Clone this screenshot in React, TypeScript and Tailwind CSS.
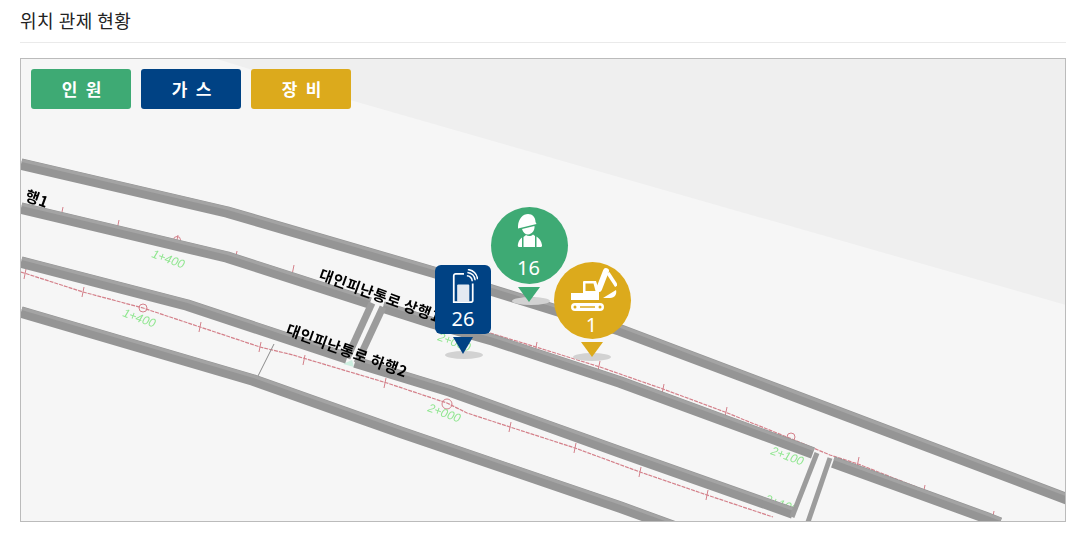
const roads = [
  "21,164 227,212 433,272 620,330 787,393 1070,500",
  "21,208 227,257 370,303",
  "383,307 433,323 493,340 620,382 813,453",
  "833,462 987,518 1000,523",
  "21,262 187,305 347,358",
  "355,362 450,391 620,452 793,513",
  "21,312 253,380 400,432 620,507 675,527",
];

const connectors = [
  { points: "372,303 347,358", width: 7 },
  { points: "383,307 357,363", width: 7 },
  { points: "817,453 792,517", width: 5 },
  { points: "830,458 808,522", width: 5 },
];

const lowerRed = "21,272 83,292 143,308 200,327 260,347 293,355 387,383 447,403 467,413 510,427 575,448 640,472 707,495 773,517";
const upperRed = "490,333 536,347 600,367 663,389 725,412 747,421 787,437 830,455 858,464 924,490 993,517";

const ticks = [
  [25, 274], [83, 292], [200, 327], [260, 347], [304, 360], [385, 383], [510, 427], [575, 448], [640, 472], [707, 495],
  [62, 212], [118, 225], [177, 240], [236, 256], [293, 270],
  [536, 347], [599, 366], [663, 389], [726, 412], [858, 462], [924, 490], [993, 516],
];

const greenLabels = [
  { x: 151, y: 257, text: "1+400" },
  { x: 122, y: 316, text: "1+400" },
  { x: 427, y: 411, text: "2+000" },
  { x: 770, y: 454, text: "2+100" },
  { x: 764, y: 502, text: "2+100" },
  { x: 437, y: 340, text: "2+000" },
];

function MapDrawing() {
  return (
    <svg viewBox="21 59 1044 462" className="absolute inset-0 h-full w-full blur-[0.7px]">
      <polygon points="217,59 350,100 1066,305 1066,59" fill="#efefef" />
      <polyline points={lowerRed} fill="none" stroke="#d4808a" strokeWidth="1.2" strokeDasharray="4 1" />
      <polyline points={upperRed} fill="none" stroke="#d4808a" strokeWidth="1.2" strokeDasharray="4 1" />
      {ticks.map(([x, y]) => (
        <line key={`${x}-${y}`} x1={x + 1} y1={y - 5} x2={x - 1} y2={y + 5} stroke="#d4808a" strokeWidth="1" />
      ))}
      <circle cx="143" cy="308" r="4" fill="none" stroke="#d4808a" />
      <circle cx="177" cy="240" r="3.5" fill="none" stroke="#d4808a" />
      <circle cx="447" cy="404" r="5" fill="none" stroke="#d4808a" />
      <circle cx="791" cy="437" r="4" fill="none" stroke="#d4808a" />
      <line x1="274" y1="344" x2="256" y2="380" stroke="#8a8a8a" strokeWidth="1" />
      <polygon points="343,364 352,360 354,367" fill="#cdeee0" />
      {greenLabels.map((label) => (
        <text
          key={`${label.x}-${label.y}`}
          x={label.x}
          y={label.y}
          fontSize="12"
          fontStyle="italic"
          fill="#8fe68f"
          fontFamily="'Liberation Sans', sans-serif"
          transform={`rotate(20 ${label.x} ${label.y})`}
        >
          {label.text}
        </text>
      ))}
      {roads.map((points) => (
        <g key={points}>
          <polyline points={points} fill="none" stroke="#959595" strokeWidth="11.5" strokeLinejoin="round" />
          <polyline points={points} fill="none" stroke="#a4a4a4" strokeWidth="3" strokeLinejoin="round" transform="translate(1 -3.5)" />
        </g>
      ))}
      {connectors.map((c) => (
        <polyline key={c.points} points={c.points} fill="none" stroke="#9c9c9c" strokeWidth={c.width} />
      ))}
      <g fill="#000" fontWeight="700" fontSize="15" fontFamily="'Noto Sans CJK KR', sans-serif" letterSpacing="0.5">
        <text x="318" y="279" transform="rotate(20 318 279)">대인피난통로 상행1</text>
        <text x="285" y="334" transform="rotate(20 285 334)">대인피난통로 하행2</text>
        <text x="24" y="200" transform="rotate(20 24 200)">행1</text>
      </g>
    </svg>
  );
}

function DeviceIcon() {
  return (
    <svg viewBox="0 0 30 36" className="h-9 w-[30px]">
      <path d="M16 5H7.500a2 2 0 0 0-2 2v27h18a1.500 1.500 0 0 0 1.500-1.500V15" fill="none" stroke="#fff" strokeWidth="1.8" />
      <rect x="9" y="16" width="12.500" height="18" rx="1" fill="#e4e9f1" />
      <g fill="none" stroke="#fff" strokeWidth="1.5">
        <path d="M19 7a5.500 5.500 0 0 1 5.500 5.500" />
        <path d="M19.500 3.500a8.500 8.500 0 0 1 8 8" />
        <path d="M20 0.500a11 11 0 0 1 10 10" />
      </g>
    </svg>
  );
}

function WorkerIcon() {
  return (
    <svg viewBox="0 0 26 36" className="h-9 w-[26px]" fill="#fff">
      <path d="M1 13C1.500 5.500 6 1 11 1c4.500 0 7.500 3.500 7.500 8l1 2L1 15.500z" />
      <path d="M5 16l12.500-3c.3 4.500-2.300 8-6.500 8.500C8 21.500 6 19.500 5 16z" />
      <path d="M6.500 24l2.500-2c2 1.500 5 1.500 7-.5l2 1.500v11H6.500z" />
      <path d="M5 24.500V34H2c-1 0-1.500-1-1-3 .5-3 2-5 4-6.500z" />
      <path d="M19.500 23.500c2.500 1.500 5 4.500 5.500 8.500.2 1.500-.5 2-1.500 2h-4z" />
    </svg>
  );
}

function ExcavatorIcon() {
  return (
    <svg viewBox="0 0 46 44" className="ml-[3px] h-[44px] w-[46px]" fill="#fff">
      <path d="M0 26h12V15a1 1 0 0 1 1-1h12l3 9v10H0z M14.500 16.500V24h10l-2-7.500z" fillRule="evenodd" />
      <path d="M28 22L35 4" fill="none" stroke="#fff" strokeWidth="6" strokeLinecap="round" />
      <path d="M37 6l8.500 13" fill="none" stroke="#fff" strokeWidth="3.500" />
      <path d="M32 31L45 23c1 4-1 8-6 8z" />
      <path
        d="M4 36h25a4 4 0 0 1 0 8H4a4 4 0 0 1 0-8zm0 2.500a1.500 1.500 0 0 0 0 3 1.500 1.500 0 0 0 0-3zm25 0a1.500 1.500 0 0 0 0 3 1.500 1.500 0 0 0 0-3zM9 39.200v1.600h15v-1.600z"
        fillRule="evenodd"
      />
    </svg>
  );
}

function Shadow({ className }: { className: string }) {
  return <div className={`absolute h-2 rounded-[50%] bg-[#d2d2d2] ${className}`} />;
}

export default function App() {
  return (
    <div className="h-[542px] w-[1086px] overflow-hidden bg-white px-5 font-['Noto_Sans','Noto_Sans_CJK_KR',sans-serif]">
      <h2 className="flex h-[43px] items-center border-b border-[#eaeaea] pb-[1px] text-[18px] font-normal tracking-[0.5px] text-[#222] font-['Noto_Sans_CJK_KR',sans-serif]">
        위치 관제 현황
      </h2>
      <div className="relative mt-[15px] h-[464px] overflow-hidden border border-[#bbbbbb] bg-[#f6f6f6]">
        <MapDrawing />

        <div className="relative flex gap-[10px] p-[10px]">
          <button className="h-10 w-[100px] rounded-[3px] bg-[#3eaa74] pl-[3px] pt-[1px] text-[17px] font-bold tracking-[2px] text-white">인 원</button>
          <button className="h-10 w-[100px] rounded-[3px] bg-[#004284] pl-[3px] pt-[1px] text-[17px] font-bold tracking-[2px] text-white">가 스</button>
          <button className="h-10 w-[100px] rounded-[3px] bg-[#dcaa1c] pl-[3px] pt-[1px] text-[17px] font-bold tracking-[2px] text-white">장 비</button>
        </div>

        <Shadow className="left-[424px] top-[292px] w-[38px]" />
        <div className="absolute left-[414px] top-[206px] flex h-[69px] w-14 flex-col items-center rounded-md bg-[#004284] pt-[4px] text-white">
          <DeviceIcon />
          <span className="text-[20px] leading-[30px]">26</span>
        </div>
        <div className="absolute left-[432px] top-[278px] h-0 w-0 border-x-[10px] border-t-[17px] border-x-transparent border-t-[#004284]" />

        <Shadow className="left-[491px] top-[238px] w-[38px]" />
        <div className="absolute left-[470px] top-[148px] flex h-[77px] w-[77px] flex-col items-center rounded-full bg-[#3eaa74] pt-[6px] text-white">
          <WorkerIcon />
          <span className="mt-1 mr-[2px] text-[20px] leading-[30px]">16</span>
        </div>
        <div className="absolute left-[497px] top-[228px] h-0 w-0 border-x-[11px] border-t-[15px] border-x-transparent border-t-[#3eaa74]" />

        <Shadow className="left-[552px] top-[294px] w-[38px]" />
        <div className="absolute left-[533px] top-[203px] flex h-[77px] w-[77px] flex-col items-center rounded-full bg-[#dcaa1c] pt-[5px] text-white">
          <ExcavatorIcon />
          <span className="mt-[1px] mr-[2px] text-[20px] leading-[26px]">1</span>
        </div>
        <div className="absolute left-[560px] top-[283px] h-0 w-0 border-x-[11px] border-t-[15px] border-x-transparent border-t-[#dcaa1c]" />
      </div>
    </div>
  );
}
